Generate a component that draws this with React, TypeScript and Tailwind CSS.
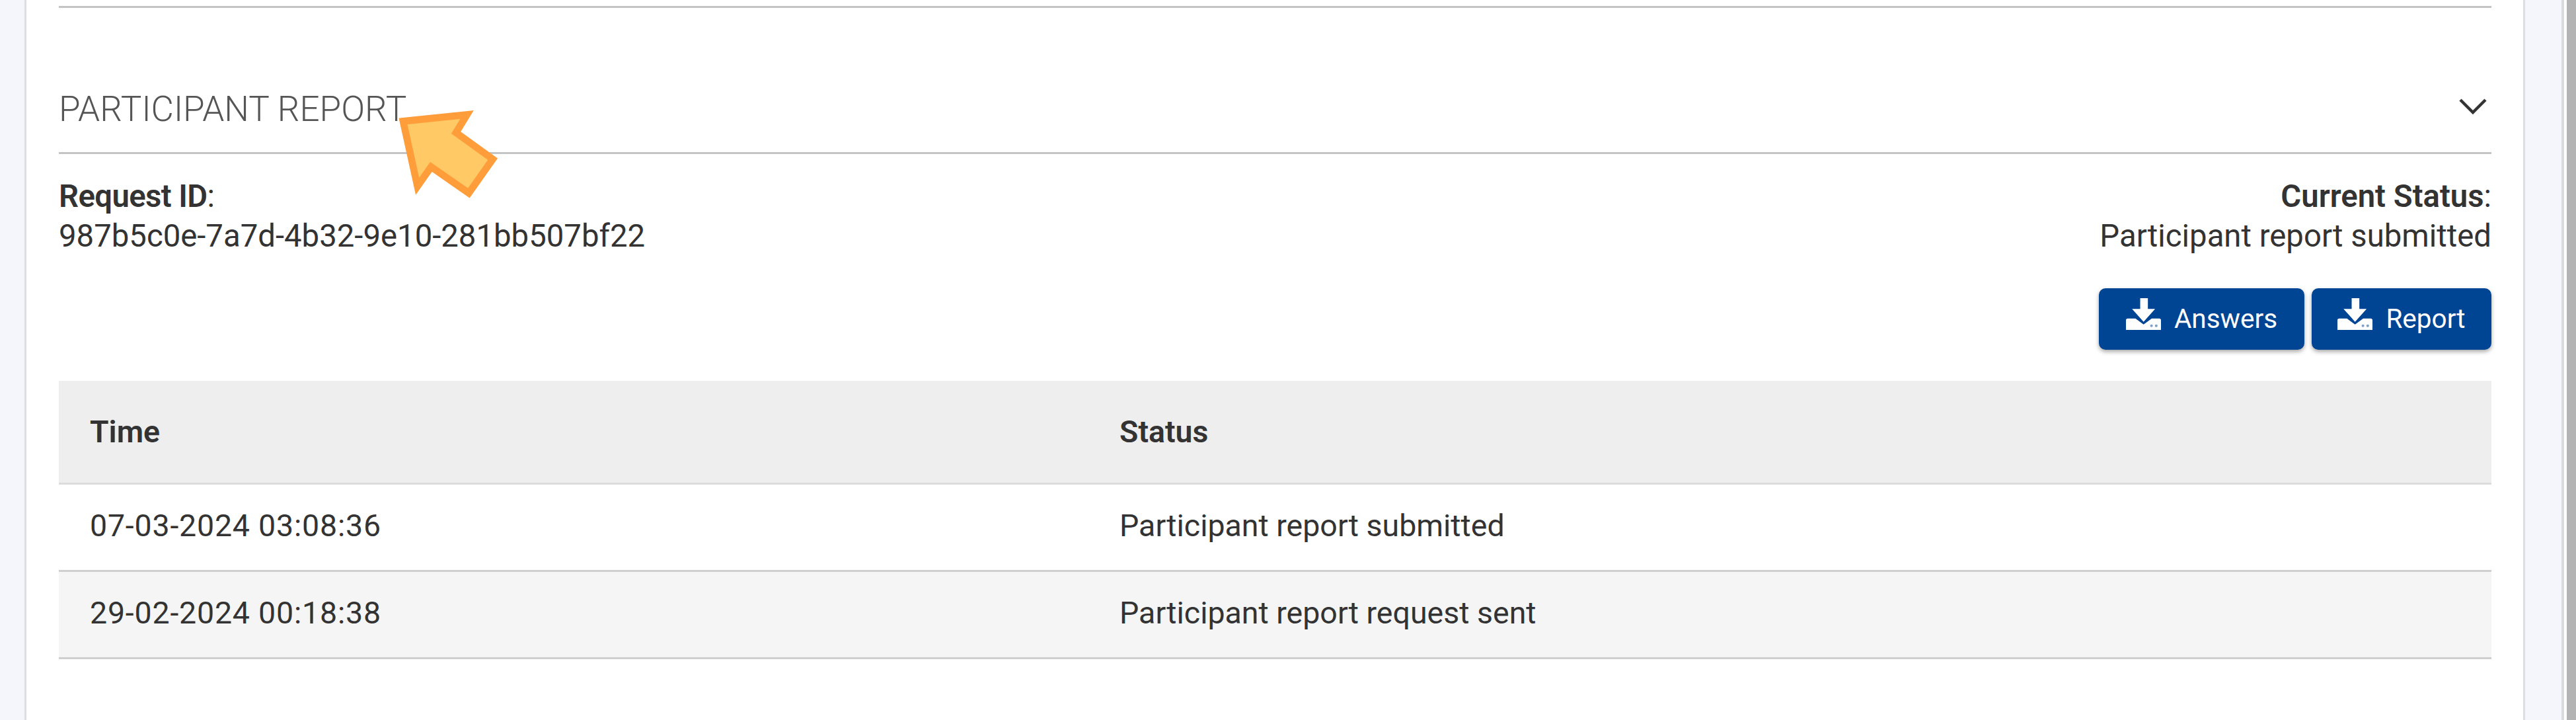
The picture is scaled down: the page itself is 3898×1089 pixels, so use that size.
const DownloadIcon = () => (
  <svg viewBox="0 0 155 140" className="w-[53px] h-[48px] shrink-0 mb-[16px]">
    <path fill="#fff" d="M63 0h34v47h32L78 104 27 47h36z" />
    <path fill="#fff" d="M0 98a8 8 0 0 1 8-8h34l36 26 36-26h33a8 8 0 0 1 8 8v42H0z" />
    <circle cx="113" cy="122" r="6" fill="#7f9fca" />
    <circle cx="134" cy="122" r="6" fill="#7f9fca" />
  </svg>
);

const rows = [
  { time: '07-03-2024 03:08:36', status: 'Participant report submitted', bg: 'bg-white' },
  { time: '29-02-2024 00:18:38', status: 'Participant report request sent', bg: 'bg-[#f5f5f5]' },
];

export default function App() {
  return (
    <div className="flex w-full h-[1089px] overflow-hidden bg-[#f4f6fb] font-['Roboto',sans-serif] text-[#333333]">
      <div className="w-[40px] shrink-0 border-r-[3px] border-[#dcdee3]" />
      <div className="relative flex-1 bg-white pl-[49px] pr-[48px]">
        <div className="mt-[9px] border-t-[3px] border-[#c4c4c4]" />
        <div className="flex justify-between h-[221px] pt-[122px] border-b-[3px] border-[#c4c4c4]">
          <h2 className="text-[53px] font-light leading-[62px] text-[#555555]">PARTICIPANT REPORT</h2>
          <svg viewBox="0 0 42 24" className="w-[42px] h-[24px] mr-[7px] mt-[15px]" fill="none" stroke="#333333" strokeWidth="4.5">
            <path d="M2 2l19 19L40 2" />
          </svg>
        </div>

        <div className="flex justify-between mt-[34px] text-[47.3px] leading-[60px]">
          <div>
            <div><span className="font-semibold tracking-[-0.6px]">Request ID</span>:</div>
            <div>987b5c0e-7a7d-4b32-9e10-281bb507bf22</div>
          </div>
          <div className="text-right">
            <div><span className="font-semibold">Current Status</span>:</div>
            <div>Participant report submitted</div>
          </div>
        </div>

        <div className="flex justify-end gap-[11px] mt-[49px]">
          <button className="flex items-center justify-center gap-[20px] w-[311px] h-[93px] rounded-[10px] bg-[#004494] text-white text-[40.5px] shadow-[0_3px_6px_rgba(0,0,0,0.35)]">
            <DownloadIcon />
            Answers
          </button>
          <button className="flex items-center justify-center gap-[20px] w-[272px] h-[93px] rounded-[10px] bg-[#004494] text-white text-[40.5px] shadow-[0_3px_6px_rgba(0,0,0,0.35)]">
            <DownloadIcon />
            Report
          </button>
        </div>

        <table className="w-full mt-[47px] border-collapse text-[46.5px] text-left">
          <thead>
            <tr className="h-[155px] bg-[#eeeeee] border-b-[3px] border-[#dcdcdc]">
              <th className="w-[1605px] pl-[47px] pt-[3px] font-semibold">Time</th>
              <th className="pt-[3px] font-semibold">Status</th>
            </tr>
          </thead>
          <tbody>
            {rows.map(r => (
              <tr key={r.time} className={`h-[132px] border-b-[3px] border-[#cfcfcf] ${r.bg}`}>
                <td className="pl-[47px] pb-[3px] tracking-[0.8px]">{r.time}</td>
                <td className="pb-[3px]">{r.status}</td>
              </tr>
            ))}
          </tbody>
        </table>

        {/* callout arrow over the heading */}
        <svg viewBox="0 0 660 510" className="absolute left-[520px] top-[140px] w-[220px] h-[170px]">
          <polygon
            points="150,130 440,100 390,182 557,302 448,456 277,337 215,425"
            fill="#ffc966"
            stroke="#ff9d3a"
            strokeWidth="32"
            strokeMiterlimit="10"
          />
        </svg>
      </div>
      <div className="w-[58px] shrink-0 border-l-[3px] border-[#dcdee3]" />
      <div className="w-[4px] shrink-0 bg-[#d8dcdc]" />
      <div className="w-[4px] shrink-0 bg-white" />
      <div className="w-[14px] shrink-0 bg-[#b4b4b4]" />
    </div>
  );
}
